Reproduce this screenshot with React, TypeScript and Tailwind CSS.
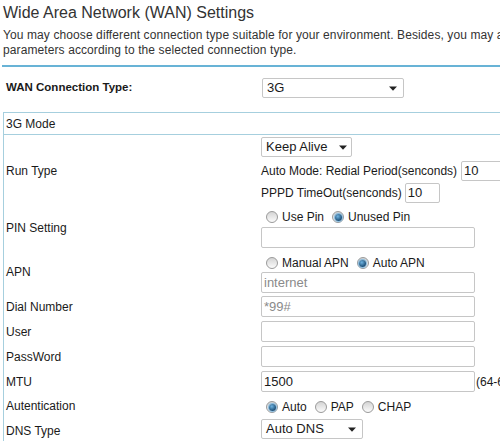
import React from "react";

function Radio({ checked }: { checked?: boolean }) {
  return (
    <span className="ml-[5px] mr-[4px] inline-flex h-[12px] w-[12px] shrink-0 items-center justify-center rounded-full border border-[#9a9a9a] bg-[linear-gradient(#d4d4d4,#fbfbfb)]">
      {checked && (
        <span className="h-[7px] w-[7px] rounded-full bg-[radial-gradient(circle_at_40%_35%,#6fb3e0,#1b4f78_70%)] shadow-[0_0_1px_1px_#7fb6dc]" />
      )}
    </span>
  );
}

function RadioOpt({ label, checked }: { label: string; checked?: boolean }) {
  return (
    <span className="mr-[3px] inline-flex items-center">
      <Radio checked={checked} />
      <span>{label}</span>
    </span>
  );
}

function Arrow() {
  return (
    <svg width="8" height="5" viewBox="0 0 8 5" className="shrink-0">
      <path d="M0 0.5h8L4 4.8z" fill="#222" />
    </svg>
  );
}

function Row({
  label,
  className,
  children,
}: {
  label: string;
  className: string;
  children: React.ReactNode;
}) {
  return (
    <div className="grid grid-cols-[257px_1fr]">
      <div className="flex items-center pl-[2px] text-[12px] text-[#1a1a1a]">{label}</div>
      <div className={className}>{children}</div>
    </div>
  );
}

const inputCls =
  "flex h-[21px] w-[214px] items-center rounded-[2px] border border-[#c6c6c6] bg-white px-[2px] text-[13px] text-[#1a1a1a]";

export default function App() {
  return (
    <div className="h-[441px] w-[500px] overflow-hidden bg-white [font-family:'Liberation_Sans',Arial,sans-serif] text-[#222]">
      <div className="w-[640px]">
        <div className="mt-[2px] pl-[3px] text-[16px] leading-[22px] text-[#333]">
          Wide Area Network (WAN) Settings
        </div>
        <div className="mt-[4px] whitespace-nowrap pl-[3px] text-[12px] leading-[15px] tracking-[0.1px] text-[#333]">
          You may choose different connection type suitable for your environment. Besides, you may also configure the
          <br />
          parameters according to the selected connection type.
        </div>
        <div className="ml-[2px] mt-[7px] h-[2px] bg-[#68b3d6]" />
        <div className="mt-[11px] grid grid-cols-[256px_1fr] pl-[6px]">
          <div className="flex items-center text-[11.5px] font-bold text-[#1a1a1a]">WAN Connection Type:</div>
          <div className="flex h-[20px] w-[142px] items-center justify-between rounded-[2px] border border-[#c6c6c6] pl-[4px] pr-[6px] text-[13px] text-[#1a1a1a]">
            <span>3G</span>
            <Arrow />
          </div>
        </div>
        <div className="ml-[3px] mt-[14px] border-l border-t border-[#a6cfde]">
          <div className="flex h-[22px] items-center border-b border-[#a6cfde] pl-[2px] text-[12px] text-[#1a1a1a]">
            3G Mode
          </div>
          <Row label="Run Type" className="flex flex-col pb-[3px] pt-[2px] text-[12px] text-[#1a1a1a]">
            <div className="flex h-[20px] w-[91px] items-center justify-between rounded-[2px] border border-[#c6c6c6] pl-[4px] pr-[4px] text-[13px]">
              <span>Keep Alive</span>
              <Arrow />
            </div>
            <div className="mt-[4px] flex items-center gap-[4px] whitespace-nowrap">
              <span>Auto Mode: Redial Period(senconds)</span>
              <div className="flex h-[20px] w-[45px] items-center rounded-[2px] border border-[#c6c6c6] px-[2px] text-[13px]">10</div>
            </div>
            <div className="mt-[2px] flex items-center gap-[3px] whitespace-nowrap">
              <span>PPPD TimeOut(senconds)</span>
              <div className="flex h-[20px] w-[35px] items-center rounded-[2px] border border-[#c6c6c6] px-[2px] text-[13px]">10</div>
            </div>
          </Row>
          <Row label="PIN Setting" className="flex flex-col pb-[2px] pt-[4px] text-[12px] text-[#1a1a1a]">
            <div className="flex h-[14px] items-center">
              <RadioOpt label="Use Pin" />
              <RadioOpt label="Unused Pin" checked />
            </div>
            <div className={"mt-[3px] " + inputCls}></div>
          </Row>
          <Row label="APN" className="flex flex-col pb-[1px] pt-[6px] text-[12px] text-[#1a1a1a]">
            <div className="flex h-[14px] items-center">
              <RadioOpt label="Manual APN" />
              <RadioOpt label="Auto APN" checked />
            </div>
            <div className={"mt-[2px] " + inputCls}>
              <span className="text-[#8a8a8a]">internet</span>
            </div>
          </Row>
          <Row label="Dial Number" className="flex flex-col py-[2px]">
            <div className={inputCls}>
              <span className="text-[#8a8a8a]">*99#</span>
            </div>
          </Row>
          <Row label="User" className="flex flex-col py-[2px]">
            <div className={inputCls}></div>
          </Row>
          <Row label="PassWord" className="flex flex-col py-[2px]">
            <div className={inputCls}></div>
          </Row>
          <Row label="MTU" className="flex flex-col py-[2px]">
            <div className="flex items-center">
              <div className={inputCls}>1500</div>
              <span className="ml-[1px] text-[12px] text-[#1a1a1a]">(64-65535)</span>
            </div>
          </Row>
          <Row label="Autentication" className="flex flex-col pb-[4px] pt-[6px] text-[12px] text-[#1a1a1a]">
            <div className="flex h-[14px] items-center">
              <RadioOpt label="Auto" checked />
              <RadioOpt label="PAP" />
              <RadioOpt label="CHAP" />
            </div>
          </Row>
          <Row label="DNS Type" className="flex flex-col pb-[4px] pt-[1px]">
            <div className="flex h-[20px] w-[102px] items-center justify-between rounded-[2px] border border-[#c6c6c6] pl-[4px] pr-[6px] text-[13px] text-[#1a1a1a]">
              <span>Auto DNS</span>
              <Arrow />
            </div>
          </Row>
        </div>
      </div>
    </div>
  );
}
